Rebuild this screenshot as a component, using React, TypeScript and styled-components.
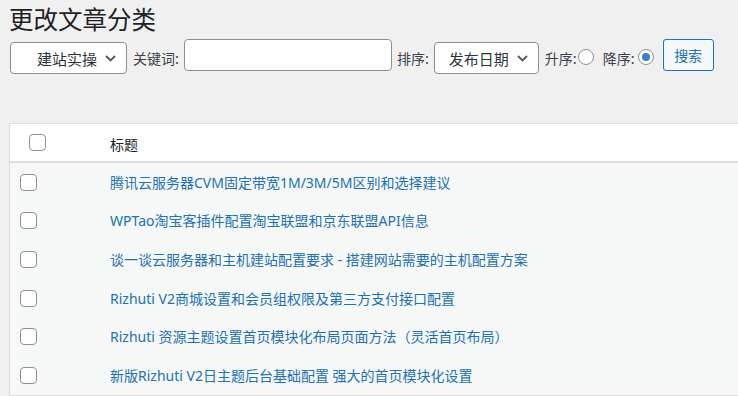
import React from "react";
import styled, { createGlobalStyle } from "styled-components";

const Global = createGlobalStyle`
  html, body { margin: 0; padding: 0; }
  body {
    background: #f0f0f1;
    font-family: "Noto Sans", "Noto Sans CJK SC", sans-serif;
    color: #3c434a;
    overflow: hidden;
  }
`;

const Page = styled.div`
  width: 738px;
  height: 396px;
  overflow: hidden;
  padding-left: 9px;
  box-sizing: border-box;
`;

const Title = styled.h1`
  margin: 0;
  padding-top: 3px;
  height: 33px;
  font-size: 24.5px;
  line-height: 32px;
  font-weight: 400;
  color: #1d2327;
  font-family: "Noto Sans CJK SC", sans-serif;
`;

const Toolbar = styled.div`
  display: flex;
  align-items: center;
  height: 40px;
  padding-left: 1px;
  font-family: "Noto Sans CJK SC", sans-serif;
`;

const SelectBox = styled.div<{ $w: number; $pl: number }>`
  box-sizing: border-box;
  width: ${(p) => p.$w}px;
  height: 32px;
  margin-top: 4px;
  border: 1px solid #8c8f94;
  border-radius: 4px;
  background: #fff;
  display: flex;
  align-items: center;
  padding-left: ${(p) => p.$pl}px;
  padding-right: 10px;
  font-size: 15px;
  color: #2c3338;
  justify-content: space-between;
`;

const Label = styled.span<{ $ml: number; $mr: number }>`
  font-size: 14px;
  color: #3c434a;
  margin-left: ${(p) => p.$ml}px;
  margin-right: ${(p) => p.$mr}px;
  margin-top: 3px;
  white-space: nowrap;
`;

const TextInput = styled.div`
  box-sizing: border-box;
  width: 208px;
  height: 32px;
  margin-top: -2px;
  border: 1px solid #8c8f94;
  border-radius: 4px;
  background: #fff;
`;

const Radio = styled.span<{ $checked?: boolean }>`
  box-sizing: border-box;
  width: 16px;
  height: 16px;
  margin-top: 1px;
  border: 1px solid #8c8f94;
  border-radius: 50%;
  background: #fff;
  display: flex;
  align-items: center;
  justify-content: center;
  &::after {
    content: "";
    display: ${(p) => (p.$checked ? "block" : "none")};
    width: 8px;
    height: 8px;
    border-radius: 50%;
    background: #3582c4;
  }
`;

const Button = styled.div`
  box-sizing: border-box;
  margin-left: 9px;
  margin-top: -2px;
  width: 51px;
  height: 32px;
  border: 1px solid #2271b1;
  border-radius: 3px;
  background: #f6f7f7;
  color: #2271b1;
  font-size: 14px;
  display: flex;
  align-items: center;
  justify-content: center;
`;

const Table = styled.div`
  margin-top: 47px;
  width: 760px;
  border: 1px solid #dcdcde;
  border-right: none;
  font-family: "Noto Sans", "Noto Sans CJK SC", sans-serif;
`;

const HeadRow = styled.div`
  display: flex;
  align-items: center;
  height: 37px;
  background: #fff;
  border-bottom: 2px solid #dcdcde;
  font-size: 14px;
  color: #1d2327;
`;

const Row = styled.div`
  display: flex;
  align-items: center;
  height: 38.6px;
  background: #f6f7f7;
  font-size: 14px;
`;

const CheckCell = styled.div<{ $w: number; $pl: number }>`
  width: ${(p) => p.$w}px;
  padding-left: ${(p) => p.$pl}px;
  box-sizing: border-box;
  display: flex;
  align-items: center;
  flex: none;
`;

const Checkbox = styled.span`
  box-sizing: border-box;
  width: 17px;
  height: 17px;
  border: 1px solid #8c8f94;
  border-radius: 4px;
  background: #fff;
`;

const HeadTitle = styled.span`
  margin-top: 3px;
  font-family: "Noto Sans CJK SC", sans-serif;
`;

const Link = styled.a`
  color: #2271b1;
  text-decoration: none;
  white-space: nowrap;
  margin-top: -1px;
`;

const Chevron = () => (
  <svg width="11" height="7" viewBox="0 0 11 7" fill="none">
    <path d="M1 1l4.5 4.5L10 1" stroke="#50575e" strokeWidth="1.8" />
  </svg>
);

const posts = [
  "腾讯云服务器CVM固定带宽1M/3M/5M区别和选择建议",
  "WPTao淘宝客插件配置淘宝联盟和京东联盟API信息",
  "谈一谈云服务器和主机建站配置要求 - 搭建网站需要的主机配置方案",
  "Rizhuti V2商城设置和会员组权限及第三方支付接口配置",
  "Rizhuti 资源主题设置首页模块化布局页面方法（灵活首页布局）",
  "新版Rizhuti V2日主题后台基础配置 强大的首页模块化设置",
];

export default function App() {
  return (
    <Page>
      <Global />
      <Title>更改文章分类</Title>
      <Toolbar>
        <SelectBox $w={117} $pl={26}>
          <span>建站实操</span>
          <Chevron />
        </SelectBox>
        <Label $ml={6} $mr={5}>关键词:</Label>
        <TextInput />
        <Label $ml={5} $mr={5}>排序:</Label>
        <SelectBox $w={105} $pl={14}>
          <span>发布日期</span>
          <Chevron />
        </SelectBox>
        <Label $ml={6} $mr={1}>升序:</Label>
        <Radio />
        <Label $ml={9} $mr={3}>降序:</Label>
        <Radio $checked />
        <Button>搜索</Button>
      </Toolbar>
      <Table>
        <HeadRow>
          <CheckCell $w={100} $pl={19}>
            <Checkbox />
          </CheckCell>
          <HeadTitle>标题</HeadTitle>
        </HeadRow>
        {posts.map((t) => (
          <Row key={t}>
            <CheckCell $w={100} $pl={10}>
              <Checkbox />
            </CheckCell>
            <Link href="#">{t}</Link>
          </Row>
        ))}
      </Table>
    </Page>
  );
}
